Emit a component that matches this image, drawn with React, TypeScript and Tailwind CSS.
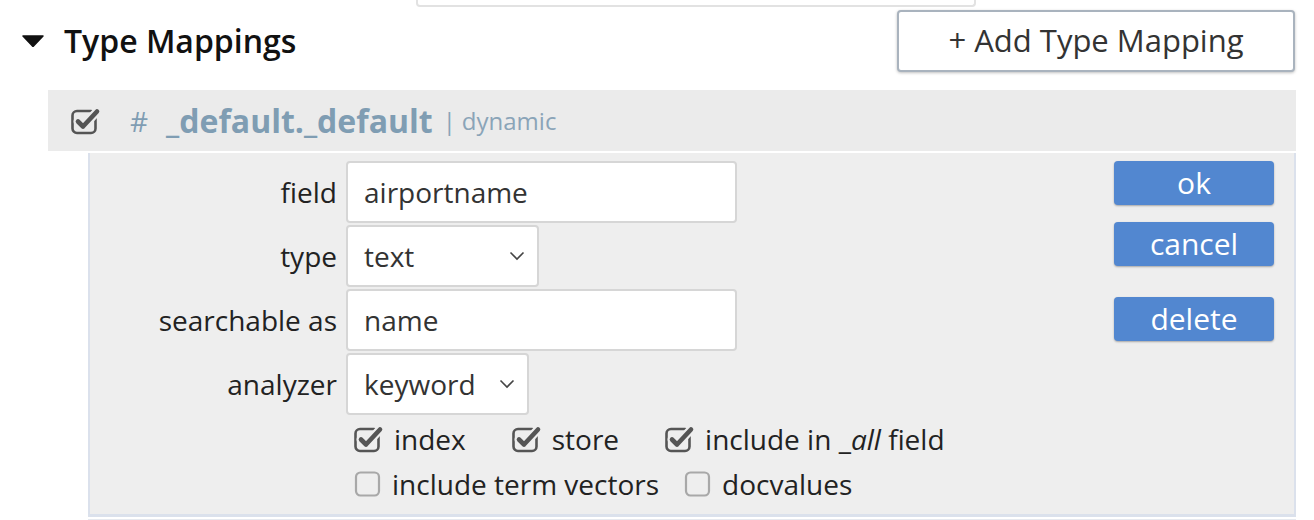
import React from 'react';

const FONT = { fontFamily: '"Open Sans", "Liberation Sans", sans-serif' };

function CheckedBox({ bg }: { bg: string }) {
  return (
    <svg width="30" height="28" viewBox="0 0 30 28" className="shrink-0">
      <rect x="1.5" y="4" width="23" height="22" rx="4.5" fill="none" stroke="#555" strokeWidth="2.6" />
      <path d="M7 14.5 L12 19.5 L26 4.5" fill="none" stroke={bg} strokeWidth="9" strokeLinecap="round" strokeLinejoin="round" />
      <path d="M7 14.5 L12 19.5 L26 4.5" fill="none" stroke="#555" strokeWidth="4.6" strokeLinecap="round" strokeLinejoin="round" />
    </svg>
  );
}

function EmptyBox() {
  return (
    <svg width="28" height="28" viewBox="0 0 28 28" className="shrink-0">
      <rect x="2" y="2.5" width="23" height="23" rx="4.5" fill="none" stroke="#a8a8a8" strokeWidth="2.2" />
    </svg>
  );
}

function Chevron() {
  return (
    <svg width="16" height="10" viewBox="0 0 16 10">
      <path d="M1.5 1.5 L8 8 L14.5 1.5" fill="none" stroke="#444" strokeWidth="1.6" />
    </svg>
  );
}

function Row({ label, children }: { label: string; children: React.ReactNode }) {
  return (
    <div className="flex items-center h-[62px] mb-[2px]">
      <div className="w-[247px] text-right text-[28px] text-[#222] leading-none">{label}</div>
      <div className="ml-[9px]">{children}</div>
    </div>
  );
}

function Check({ on, label }: { on: boolean; label: React.ReactNode }) {
  return (
    <div className="flex items-center gap-[10px]">
      {on ? <CheckedBox bg="#eeeeee" /> : <EmptyBox />}
      <span className="text-[28px] text-[#222] leading-none">{label}</span>
    </div>
  );
}

const inputCls = 'h-[62px] bg-white border-2 border-[#d6d6d6] rounded-[4px] flex items-center pl-[16px] text-[28px] text-[#333]';
const btnCls = 'h-[44px] bg-[#5287d0] rounded-[4px] text-white text-[30px] leading-none shadow-[0_1px_2px_rgba(0,0,0,0.3)]';

export default function App() {
  return (
    <div className="w-[1314px] h-[520px] overflow-hidden bg-white relative" style={FONT}>
      <div className="ml-[416px] w-[560px] h-[7px] border-x-2 border-b-2 border-[#e2e2e2] rounded-b-[4px]" />

      <div className="flex items-center justify-between pl-[22px] pr-[19px] mt-[2px] h-[63px]">
        <div className="flex items-center">
          <svg width="22" height="12" viewBox="0 0 22 12">
            <path d="M1 1 L21 1 L11 11.5 Z" fill="#111" stroke="#111" strokeWidth="1.5" strokeLinejoin="round" />
          </svg>
          <h2 className="ml-[20px] text-[32px] font-semibold text-[#111] leading-none">Type Mappings</h2>
        </div>
        <button className="w-[398px] h-[62px] border-2 border-[#a9b3be] rounded-[4px] bg-white text-[31px] text-[#333] shadow-[0_1px_3px_rgba(0,0,0,0.25)]">
          + Add Type Mapping
        </button>
      </div>

      <div className="ml-[48px] mt-[18px] w-[1248px] h-[61px] bg-[#ebebeb] flex items-center pl-[23px]">
        <CheckedBox bg="#ebebeb" />
        <span className="ml-[29px] text-[28px] text-[#7f9db3] leading-none">#</span>
        <span className="ml-[18px] text-[32px] font-bold text-[#7f9db3] leading-none">_default._default</span>
        <span className="ml-[10px] text-[24px] text-[#8aa4b8] leading-none">|</span>
        <span className="ml-[6px] text-[24px] text-[#8aa4b8] leading-none">dynamic</span>
      </div>

      <div className="ml-[88px] mt-[2px] w-[1208px] h-[364px] bg-[#eeeeee] border-l-2 border-r-2 border-b-[3px] border-[#dbe1ec] flex">
        <div className="flex-1 pt-[8px]">
          <Row label="field">
            <div className={`w-[391px] ${inputCls}`}>airportname</div>
          </Row>
          <Row label="type">
            <div className={`w-[193px] justify-between pr-[12px] ${inputCls}`}>
              <span>text</span>
              <Chevron />
            </div>
          </Row>
          <Row label="searchable as">
            <div className={`w-[391px] ${inputCls}`}>name</div>
          </Row>
          <Row label="analyzer">
            <div className={`w-[183px] justify-between pr-[12px] ${inputCls}`}>
              <span>keyword</span>
              <Chevron />
            </div>
          </Row>
          <div className="ml-[264px] mt-[10px] flex flex-col gap-[17px]">
            <div className="flex items-center gap-[46px]">
              <Check on label="index" />
              <Check on label="store" />
              <Check on label={<>include in _<i>all</i> field</>} />
            </div>
            <div className="flex items-center gap-[25px]">
              <Check on={false} label="include term vectors" />
              <Check on={false} label="docvalues" />
            </div>
          </div>
        </div>
        <div className="w-[160px] mr-[20px] pt-[8px] flex flex-col">
          <button className={btnCls}>ok</button>
          <button className={`mt-[17px] ${btnCls}`}>cancel</button>
          <button className={`mt-[31px] ${btnCls}`}>delete</button>
        </div>
      </div>
      <div className="ml-[88px] mt-[2px] w-[1208px] h-[2px] bg-[#e6e9ef]" />
    </div>
  );
}
